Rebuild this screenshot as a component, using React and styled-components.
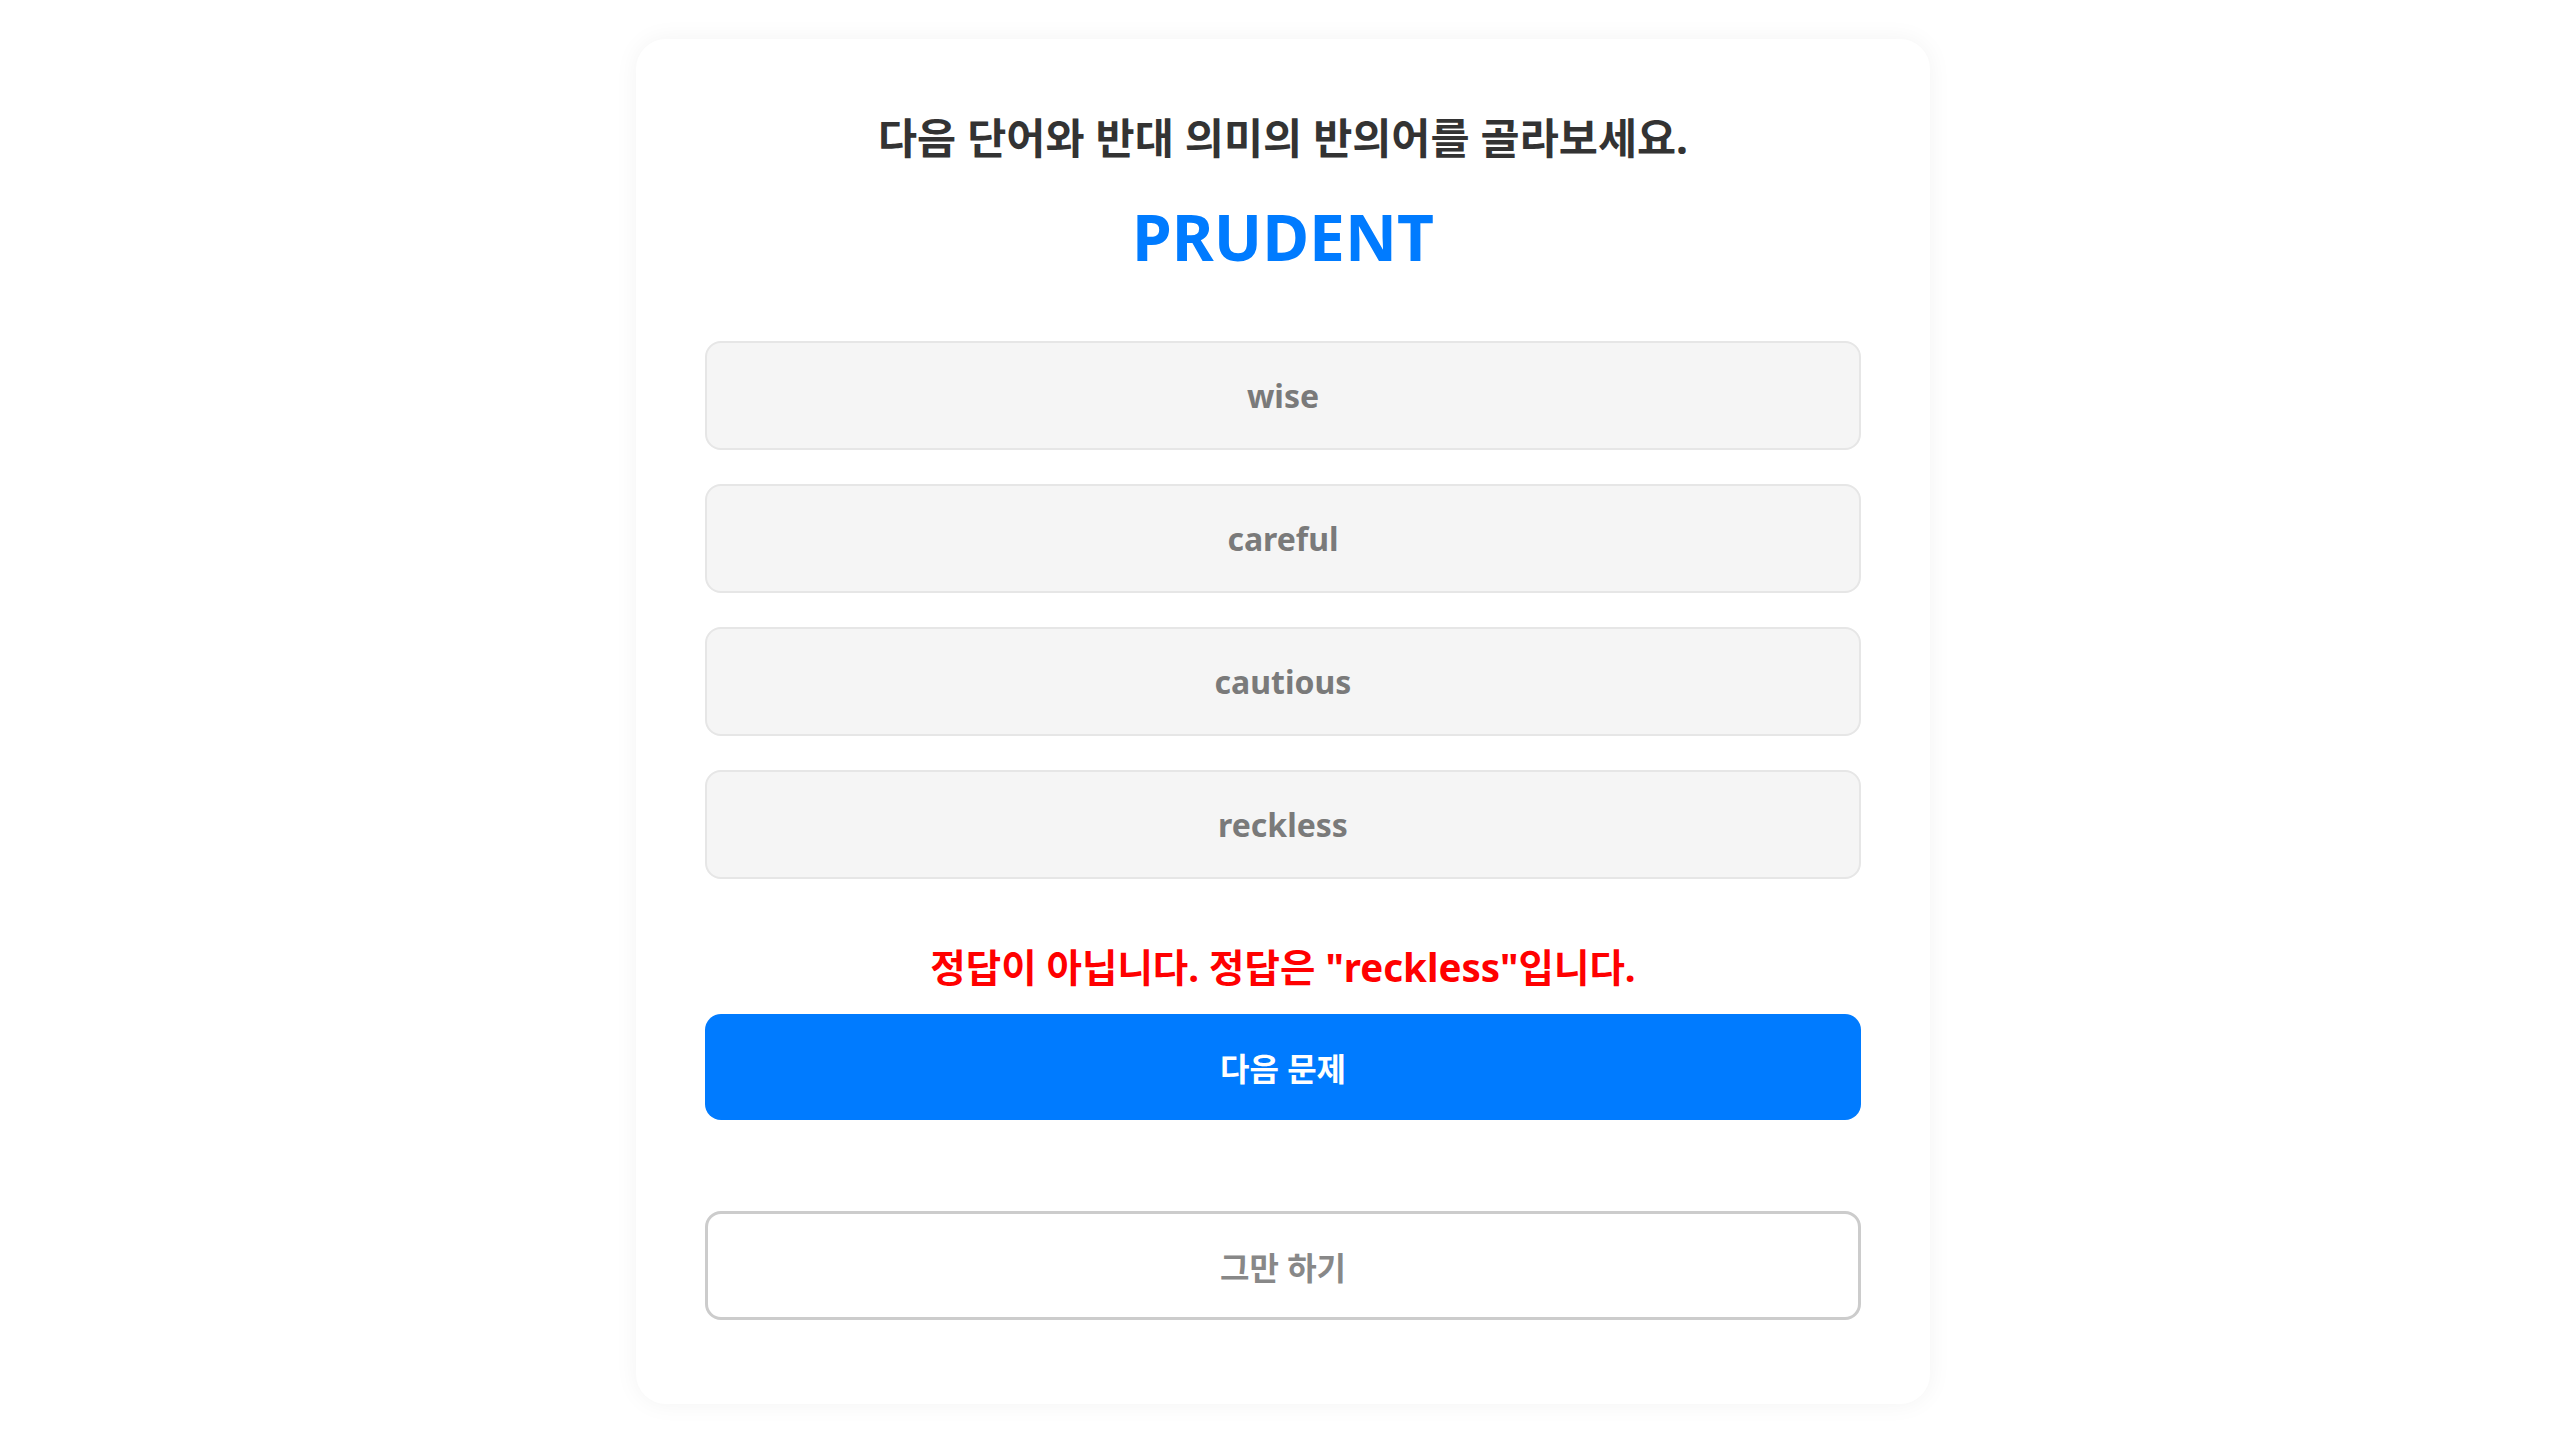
import React from 'react'
import styled, { createGlobalStyle } from 'styled-components'

const GlobalStyle = createGlobalStyle`
  * {
    box-sizing: border-box;
  }
  body {
    margin: 0;
    background: #ffffff;
    font-family: "Noto Sans", "Noto Sans CJK KR", sans-serif;
  }
`

const options = ['wise', 'careful', 'cautious', 'reckless']

function App() {
    return (
        <>
            <GlobalStyle />
            <Page>
                <Card>
                    <Question>다음 단어와 반대 의미의 반의어를 골라보세요.</Question>
                    <Word>PRUDENT</Word>
                    <OptionList>
                        {options.map(option => (
                            <OptionButton key={option}>{option}</OptionButton>
                        ))}
                    </OptionList>
                    <Feedback>정답이 아닙니다. 정답은 "reckless"입니다.</Feedback>
                    <NextButton>다음 문제</NextButton>
                    <StopButton>그만 하기</StopButton>
                </Card>
            </Page>
        </>
    )
}

export default App

const Page = styled.div`
    display: flex;
    justify-content: center;
    padding-top: 39px;
    padding-left: 6px;
    min-height: 1433px;
`

const Card = styled.div`
    width: 1294px;
    align-self: flex-start;
    background-color: white;
    border-radius: 30px;
    box-shadow: 0 0 24px rgba(0, 0, 0, 0.05);
    padding: 74px 69px 84px;
    display: flex;
    flex-direction: column;
`

const Question = styled.h2`
    margin: 0;
    font-size: 42.5px;
    line-height: 50px;
    font-weight: 700;
    color: #333333;
    text-align: center;
`

const Word = styled.h1`
    margin: 35px 0 0;
    font-size: 64px;
    line-height: 77px;
    font-weight: 700;
    color: #007bff;
    text-align: center;
`

const OptionList = styled.div`
    display: flex;
    flex-direction: column;
    gap: 34px;
    margin-top: 66px;
`

const OptionButton = styled.button`
    height: 109px;
    width: 100%;
    background-color: #f5f5f5;
    border: 2px solid #e6e6e6;
    border-radius: 16px;
    font-family: inherit;
    font-size: 32px;
    font-weight: 700;
    color: #7a7a7a;
    cursor: pointer;
`

const Feedback = styled.p`
    margin: 64px 0 0;
    font-size: 38.5px;
    line-height: 48px;
    font-weight: 700;
    color: #ff0000;
    text-align: center;
`

const NextButton = styled.button`
    margin-top: 23px;
    height: 106px;
    width: 100%;
    background-color: #007bff;
    border: none;
    border-radius: 16px;
    font-family: inherit;
    font-size: 32px;
    font-weight: 700;
    color: white;
    cursor: pointer;
`

const StopButton = styled.button`
    margin-top: 91px;
    height: 109px;
    width: 100%;
    background-color: white;
    border: 3px solid #cccccc;
    border-radius: 16px;
    font-family: inherit;
    font-size: 32px;
    font-weight: 700;
    color: #888888;
    cursor: pointer;
`
